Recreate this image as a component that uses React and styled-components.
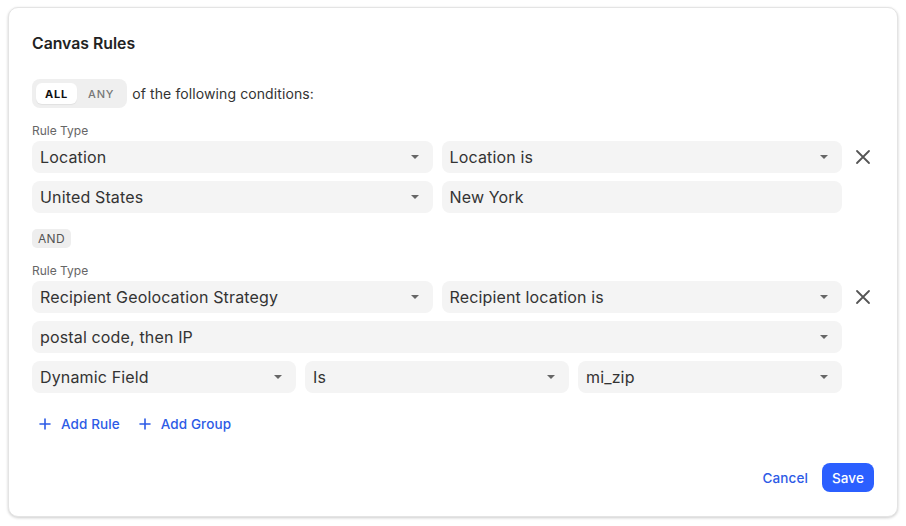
import styled, { createGlobalStyle } from 'styled-components';

const GlobalStyle = createGlobalStyle`
  html, body {
    margin: 0;
    padding: 0;
    background: #ffffff;
    font-family: Inter, "Noto Sans", sans-serif;
  }
  * { box-sizing: border-box; }
`;

const Page = styled.div`
  padding: 7px 8px 9px 8px;
`;

const Card = styled.div`
  background: #fff;
  border: 1px solid #e4e4e4;
  border-radius: 10px;
  box-shadow: 0 1px 3px rgba(0, 0, 0, 0.2);
  padding: 26px 23px 24px 23px;
  height: 510px;
  display: flex;
  flex-direction: column;
`;

const Title = styled.h2`
  margin: 0;
  font-size: 15.8px;
  line-height: 20px;
  font-weight: 600;
  color: #222;
`;

const MatchLine = styled.div`
  display: flex;
  align-items: center;
  gap: 5px;
  margin-top: 25px;
  font-size: 14px;
  letter-spacing: 0.1px;
  color: #333;
`;

const Toggle = styled.div`
  display: flex;
  align-items: center;
  gap: 2px;
  background: #efefef;
  border-radius: 8px;
  padding: 4px;
  height: 29px;
`;

const ToggleOption = styled.span`
  height: 21px;
  padding: 0 9px;
  display: flex;
  align-items: center;
  border-radius: 6px;
  font-size: 11px;
  font-weight: ${(p) => (p.$active ? 700 : 500)};
  letter-spacing: 0.8px;
  color: ${(p) => (p.$active ? '#111' : '#777')};
  background: ${(p) => (p.$active ? '#fff' : 'transparent')};
  box-shadow: ${(p) => (p.$active ? '0 1px 1px rgba(0,0,0,0.06)' : 'none')};
`;

const Label = styled.div`
  margin-top: 16px;
  margin-bottom: 3px;
  font-size: 12px;
  line-height: 14px;
  color: #666;
`;

const Rows = styled.div`
  display: flex;
  flex-direction: column;
  gap: 8px;
`;

const Row = styled.div`
  display: grid;
  grid-template-columns: ${(p) => p.$cols} 23px;
  gap: 9px;
  align-items: center;
`;

const Field = styled.div`
  height: 32px;
  background: #f4f4f4;
  border-radius: 8px;
  padding: 0 14px 0 8px;
  display: flex;
  align-items: center;
  justify-content: space-between;
  font-size: 16px;
  letter-spacing: 0.15px;
  color: #333;
  grid-column: ${(p) => p.$span || 'auto'};
`;

const Caret = styled.span`
  width: 0;
  height: 0;
  border-left: 4px solid transparent;
  border-right: 4px solid transparent;
  border-top: 4px solid #666;
`;

const RemoveButton = styled.button`
  border: none;
  background: none;
  padding: 0;
  width: 23px;
  height: 24px;
  display: flex;
  align-items: center;
  justify-content: center;
  cursor: pointer;
  color: #555;
`;

const Operator = styled.span`
  align-self: flex-start;
  margin-top: 16px;
  height: 19px;
  padding: 0 6px;
  display: flex;
  align-items: center;
  border-radius: 5px;
  background: #eeeeee;
  font-size: 12px;
  letter-spacing: 0.3px;
  color: #555;
`;

const Actions = styled.div`
  display: flex;
  gap: 19px;
  margin-top: 23px;
  padding-left: 7px;
`;

const LinkButton = styled.button`
  border: none;
  background: none;
  padding: 0;
  display: flex;
  align-items: center;
  gap: 10px;
  font-family: inherit;
  font-size: 13.5px;
  font-weight: 500;
  letter-spacing: 0.1px;
  color: #2d5be6;
  cursor: pointer;
`;

const Footer = styled.div`
  margin-top: auto;
  display: flex;
  justify-content: flex-end;
  align-items: center;
  gap: 14px;
`;

const SaveButton = styled.button`
  border: none;
  background: #2b5fff;
  color: #fff;
  height: 29px;
  padding: 0 10px;
  border-radius: 8px;
  font-family: inherit;
  font-size: 13.5px;
  font-weight: 500;
  letter-spacing: 0.1px;
  cursor: pointer;
`;

const Select = ({ children, span }) => (
  <Field $span={span}>
    <span>{children}</span>
    <Caret />
  </Field>
);

const Input = ({ children }) => <Field>{children}</Field>;

const XIcon = () => (
  <svg width="16" height="16" viewBox="0 0 16 16" fill="none" stroke="currentColor" strokeWidth="1.8" strokeLinecap="round">
    <path d="M2 2 L14 14 M14 2 L2 14" />
  </svg>
);

const PlusIcon = () => (
  <svg width="12" height="12" viewBox="0 0 12 12" fill="none" stroke="currentColor" strokeWidth="1.6" strokeLinecap="round">
    <path d="M6 1 V11 M1 6 H11" />
  </svg>
);

const Spacer = () => <span />;

export default function App() {
  return (
    <>
      <GlobalStyle />
      <Page>
        <Card>
          <Title>Canvas Rules</Title>
          <MatchLine>
            <Toggle>
              <ToggleOption $active>ALL</ToggleOption>
              <ToggleOption>ANY</ToggleOption>
            </Toggle>
            of the following conditions:
          </MatchLine>

          <Label>Rule Type</Label>
          <Rows>
            <Row $cols="1fr 1fr">
              <Select>Location</Select>
              <Select>Location is</Select>
              <RemoveButton aria-label="Remove rule"><XIcon /></RemoveButton>
            </Row>
            <Row $cols="1fr 1fr">
              <Select>United States</Select>
              <Input>New York</Input>
              <Spacer />
            </Row>
          </Rows>

          <Operator>AND</Operator>

          <Label>Rule Type</Label>
          <Rows>
            <Row $cols="1fr 1fr">
              <Select>Recipient Geolocation Strategy</Select>
              <Select>Recipient location is</Select>
              <RemoveButton aria-label="Remove rule"><XIcon /></RemoveButton>
            </Row>
            <Row $cols="1fr 1fr">
              <Select span="1 / 3">postal code, then IP</Select>
              <Spacer />
            </Row>
            <Row $cols="1fr 1fr 1fr">
              <Select>Dynamic Field</Select>
              <Select>Is</Select>
              <Select>mi_zip</Select>
              <Spacer />
            </Row>
          </Rows>

          <Actions>
            <LinkButton><PlusIcon />Add Rule</LinkButton>
            <LinkButton><PlusIcon />Add Group</LinkButton>
          </Actions>

          <Footer>
            <LinkButton>Cancel</LinkButton>
            <SaveButton>Save</SaveButton>
          </Footer>
        </Card>
      </Page>
    </>
  );
}
